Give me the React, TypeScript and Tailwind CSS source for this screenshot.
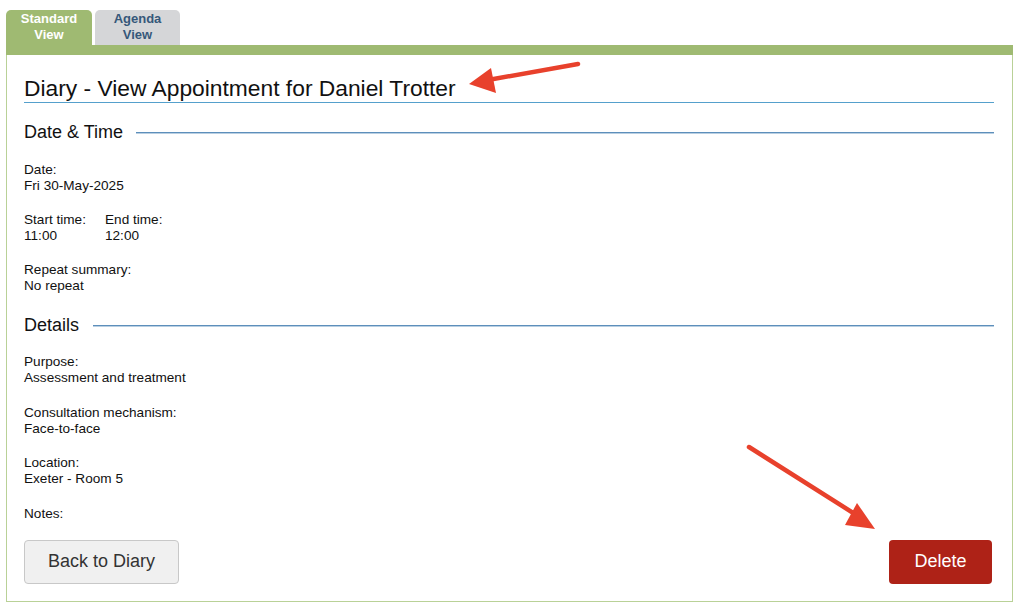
import React from "react";

const Field = ({ label, value }: { label: string; value?: string }) => (
  <div className="text-[13.6px] leading-[16px] text-[#111]">
    <div>{label}</div>
    {value !== undefined && <div>{value}</div>}
  </div>
);

const Section = ({ title, gap }: { title: string; gap: string }) => (
  <div className="flex items-center text-[18px] leading-[22px] text-[#111]">
    <span>{title}</span>
    <div className={`flex-1 h-px bg-[#5d8fbb] shadow-[0_1px_0_#b9cfe2] ${gap}`} />
  </div>
);

export default function App() {
  return (
    <div
      className="relative w-[1024px] h-[606px] bg-white overflow-hidden"
      style={{ fontFamily: '"Liberation Sans", Arial, sans-serif' }}
    >
      <div className="pt-[10px] pl-[6px] pr-[11px]">
        <div className="flex gap-[3px] items-end">
          <div className="w-[86px] h-[35px] rounded-t-[5px] bg-[#9fba72] text-white font-bold text-[13px] leading-[16px] flex flex-col items-center justify-center pb-[1px]">
            <span>Standard</span>
            <span>View</span>
          </div>
          <div className="w-[85px] h-[35px] rounded-t-[5px] bg-[#d5d6d8] text-[#35587a] font-bold text-[13px] leading-[16px] flex flex-col items-center justify-center pb-[1px]">
            <span>Agenda</span>
            <span>View</span>
          </div>
        </div>
        <div className="h-[10px] bg-[#9fba72]" />
        <div className="border-x border-b border-[#b9d197] pl-[17px] pr-[18px] pb-[17px]">
          <h1 className="pt-[20px] text-[22.8px] leading-[26px] text-[#111] border-b border-[#55a0cc] pb-[1px]">
            Diary - View Appointment for Daniel Trotter
          </h1>
          <div className="mt-[18px]">
            <Section title="Date & Time" gap="ml-[13px]" />
          </div>
          <div className="mt-[19px] flex flex-col gap-[18px]">
            <Field label="Date:" value="Fri 30-May-2025" />
            <div className="flex">
              <div className="w-[81px]">
                <Field label="Start time:" value="11:00" />
              </div>
              <Field label="End time:" value="12:00" />
            </div>
            <Field label="Repeat summary:" value="No repeat" />
          </div>
          <div className="mt-[20px]">
            <Section title="Details" gap="ml-[14px]" />
          </div>
          <div className="mt-[18px] flex flex-col gap-[18.67px]">
            <Field label="Purpose:" value="Assessment and treatment" />
            <Field label="Consultation mechanism:" value="Face-to-face" />
            <Field label="Location:" value="Exeter - Room 5" />
            <Field label="Notes:" />
          </div>
          <div className="mt-[18px] flex justify-between">
            <button className="w-[155px] h-[44px] rounded-[4px] border border-[#c8c8c8] bg-[#f0f0f0] text-[18px] text-[#333]">
              Back to Diary
            </button>
            <button className="w-[103px] h-[44px] mr-[2px] rounded-[4px] bg-[#ae2217] text-[18px] text-white">
              Delete
            </button>
          </div>
        </div>
      </div>
      <svg
        className="absolute inset-0 pointer-events-none"
        width="1024"
        height="606"
        viewBox="0 0 1024 606"
      >
        <line x1="578" y1="64" x2="488" y2="80" stroke="#e8412c" strokeWidth="4.5" strokeLinecap="round" />
        <polygon points="469,84 491,68 496,93" fill="#e8412c" />
        <line x1="749" y1="447" x2="858" y2="516" stroke="#e8412c" strokeWidth="4.5" strokeLinecap="round" />
        <polygon points="875,529 857,503 845,525" fill="#e8412c" />
      </svg>
    </div>
  );
}
